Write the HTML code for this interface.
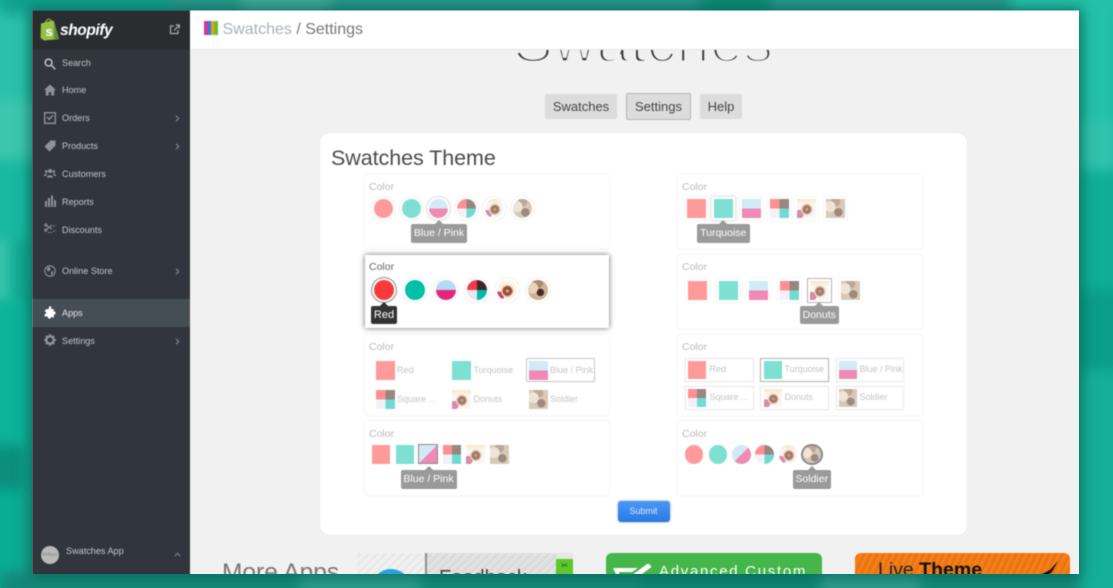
<!DOCTYPE html>
<html><head><meta charset="utf-8"><style>
html,body{margin:0;padding:0;width:1113px;height:588px;overflow:hidden;background:#12a992;font-family:"Liberation Sans",sans-serif}
#root{position:absolute;left:0;top:0;width:1113px;height:588px;overflow:hidden;contain:strict}
#bg{position:absolute;left:0;top:0;width:1113px;height:588px;filter:blur(6px)}
#bg b{position:absolute;display:block}
#shadow{position:absolute;left:32px;top:10.5px;width:1047px;height:563.5px;box-shadow:0 0 12px 3px rgba(0,70,60,.55)}
#win{position:absolute;left:0;top:0;width:1113px;height:588px;clip-path:inset(10.5px 34px 14px 32px);background:#f1f1f1;filter:blur(.45px)}
#win div,#win span,#win i,#win svg{position:absolute;display:block}
.top{left:190px;top:10px;width:889px;height:39px;background:#fff;border-bottom:1px solid #e6e6e6}
.side{left:32px;top:10px;width:158px;height:565px;background:#31363e}
.nav{left:62px;font-size:9.1px;line-height:12px;color:#c0c4c9;white-space:nowrap}
.btn{background:#dcdcdc;border-radius:2px;color:#444;font-size:13px;text-align:center;line-height:25px;height:25px;top:94px}
.p{background:#fff;box-shadow:0 0 3px rgba(0,0,0,.09);width:244px}
.c{font-size:10.5px;line-height:12px;color:#bbb}
.sw{box-sizing:border-box}
.rd{border-radius:50%}
.r{background:#ff9a9a}.t{background:#7de0d0}
.b{background:linear-gradient(#d0eaf8 50%,#f08ab4 50%)}
.g{background:linear-gradient(to bottom right,#d0eaf8 50%,#f08ab4 50%)}
.q{background:conic-gradient(#96877f 0 25%,#70dbd3 25% 50%,#f5f0f8 50% 75%,#ff8f92 75%)}
.d{background:radial-gradient(circle at 52% 55%,#c8a48c 0 9%,#a87a66 10% 30%,#e9d6c6 31% 40%,transparent 42%),radial-gradient(circle at 12% 80%,#d88aa8 0 18%,transparent 20%),linear-gradient(#f6e8c4,#fbf6f4 30%)}
.s{background:radial-gradient(circle at 22% 40%,#efe4d6 0 28%,transparent 30%),radial-gradient(circle at 65% 70%,#9c8a80 0 22%,transparent 24%),radial-gradient(circle at 50% 15%,#bba898 0 24%,transparent 26%),#d8c8b8}
.R{background:#f93a3a}.T{background:#00c0a8}
.B{background:linear-gradient(#aedcf5 50%,#e4267a 50%)}
.Q{background:conic-gradient(#3a2828 0 25%,#00b8ae 25% 50%,#f0e4ee 50% 75%,#f43a4a 75%)}
.D{background:radial-gradient(circle at 52% 55%,#d8b090 0 9%,#97503a 10% 32%,#eed2bb 33% 42%,transparent 44%),radial-gradient(circle at 12% 80%,#c23f6f 0 18%,transparent 20%),#fdf5e5}
.S{background:radial-gradient(circle at 22% 40%,#e8d4ba 0 28%,transparent 30%),radial-gradient(circle at 62% 62%,#3d2d25 0 20%,transparent 22%),radial-gradient(circle at 50% 15%,#a98a70 0 24%,transparent 26%),#cfb090}
.ring{background:#fff;box-shadow:0 0 2px rgba(0,0,0,.14);border-radius:50%}
.fr{background:#fff;box-shadow:0 0 2px rgba(0,0,0,.1)}
.tip{background:#9a9a9a;color:#fff;font-size:10.5px;text-align:center;line-height:19px;height:19px;border-radius:2px}
.tip:before{content:"";position:absolute;left:50%;top:-4px;margin-left:-4px;border:4px solid transparent;border-top:0;border-bottom-color:#9a9a9a}
.lb{font-size:9px;line-height:12px;color:#c4c4c4;white-space:nowrap}
.box{background:#fff;box-sizing:border-box;border:1px solid #ececec;box-shadow:0 0 1px rgba(0,0,0,.1)}
.sel{border:1px solid #b5b5b5}
</style></head><body>
<div id="root">
<div id="bg">
<b style="left:-20px;top:0;width:52px;height:100px;background:#29c1a9"></b>
<b style="left:-20px;top:100px;width:60px;height:60px;background:#3cc6b0"></b>
<b style="left:-20px;top:160px;width:50px;height:80px;background:#18b9a0"></b>
<b style="left:-20px;top:240px;width:30px;height:60px;background:#38c4ad"></b>
<b style="left:-20px;top:300px;width:50px;height:160px;background:#0cb398"></b>
<b style="left:-20px;top:445px;width:44px;height:45px;background:#0b8f7c"></b>
<b style="left:-20px;top:490px;width:40px;height:110px;background:#08ad93"></b>
<b style="left:0;top:-20px;width:1113px;height:34px;background:#26988a"></b>
<b style="left:0;top:-20px;width:170px;height:34px;background:#11a08c"></b>
<b style="left:240px;top:-20px;width:90px;height:34px;background:#40a899"></b>
<b style="left:700px;top:-20px;width:70px;height:34px;background:#0f8a78"></b>
<b style="left:1010px;top:-20px;width:120px;height:34px;background:#25c0a8"></b>
<b style="left:0;top:572px;width:1113px;height:30px;background:#14887a"></b>
<b style="left:300px;top:572px;width:120px;height:30px;background:#2b9c8c"></b>
<b style="left:640px;top:572px;width:220px;height:30px;background:#0f8474"></b>
<b style="left:820px;top:572px;width:100px;height:30px;background:#2e9b8c"></b>
<b style="left:1079px;top:0;width:40px;height:120px;background:#24c0a9"></b>
<b style="left:1079px;top:120px;width:40px;height:50px;background:#31c2ac"></b>
<b style="left:1079px;top:170px;width:40px;height:120px;background:#10ae96"></b>
<b style="left:1079px;top:290px;width:40px;height:80px;background:#0a9d87"></b>
<b style="left:1079px;top:370px;width:40px;height:230px;background:#16ae97"></b>
</div>
<div id="shadow"></div>
<div id="win">

<div style="left:513px;top:7px;font-size:60px;line-height:70px;color:#333;-webkit-text-stroke:3.4px #f1f1f1;white-space:nowrap">Swatches</div>

<div class="top"></div>
<div style="left:204px;top:21px;width:14px;height:14px;background:linear-gradient(90deg,#ee2a8c 0 26%,#2680e8 26% 50%,#f8961a 50% 75%,#50c830 75%)"></div>
<div style="left:222.5px;top:20px;font-size:16px;line-height:19px;color:#aab0ba;white-space:nowrap">Swatches <span style="position:static;display:inline;color:#777">/ Settings</span></div>

<div class="side"></div>
<div style="left:32px;top:10px;width:158px;height:40px;background:#2a2d30"></div>
<svg style="left:40px;top:18px" width="20" height="23" viewBox="0 0 20 23"><path d="M1 5.5 12 2.5 14 3.2 19 21 4 22.5 0.5 20Z" fill="#95bf47"/><path d="M14 3.2 19 21 14 22Z" fill="#5e8e3e"/><path d="M5 6C5.5 3 7.5 1 9 1s2 2 2 4" fill="none" stroke="#95bf47"/><text x="5.5" y="18" font-size="13" font-weight="700" font-family="Liberation Sans" fill="#fff">s</text></svg>
<div style="left:60px;top:21px;font-size:15.5px;line-height:19px;font-weight:700;font-style:italic;color:#fff;letter-spacing:-.4px;white-space:nowrap">shopify</div>
<svg style="left:169px;top:24px" width="11" height="11" viewBox="0 0 11 11" fill="none" stroke="#a8adb2" stroke-width="1.2"><path d="M5 2H1.5v7.500H9V6"/><path d="M5 6.500 10 1.500M6.800 1H10.300V4.500"/></svg>

<div style="left:32px;top:299px;width:158px;height:28px;background:#454d55"></div>

<svg style="left:44px;top:58px" width="12" height="12" viewBox="0 0 12 12" fill="none" stroke="#b9bdc3" stroke-width="1.6"><circle cx="4.600" cy="4.600" r="3.400"/><path d="M7.200 7.200 11.300 11.300"/></svg>
<div class="nav" style="top:57px">Search</div>
<svg style="left:44px;top:84px" width="12" height="12" viewBox="0 0 12 12" fill="#8d9399"><path d="M6 .5 0 6h1.800v5.500h3V8h2.400v3.500h3V6H12Z"/></svg>
<div class="nav" style="top:84px">Home</div>
<svg style="left:44px;top:112px" width="12" height="12" viewBox="0 0 12 12" fill="none" stroke="#8d9399" stroke-width="1.400"><rect x=".7" y=".7" width="10.600" height="10.600"/><path d="M3 5 5.300 7.300 9 3.200"/></svg>
<div class="nav" style="top:112px">Orders</div>
<svg style="left:44px;top:140px" width="12" height="12" viewBox="0 0 12 12" fill="#8d9399"><path d="M6.500.5H11.500V5.500L5.500 11.500.5 6.500Z"/></svg>
<div class="nav" style="top:140px">Products</div>
<svg style="left:44px;top:168px" width="12" height="11" viewBox="0 0 12 11" fill="#8d9399"><circle cx="6" cy="3" r="2"/><circle cx="2.300" cy="3.500" r="1.400"/><circle cx="9.700" cy="3.500" r="1.400"/><path d="M2.800 9.500C3 6.500 9 6.500 9.200 9.500ZM0 8C0 5.800 2 5.500 3 6L1.800 8ZM12 8C12 5.800 10 5.500 9 6L10.200 8Z"/></svg>
<div class="nav" style="top:168px">Customers</div>
<svg style="left:45px;top:195px" width="11" height="12" viewBox="0 0 11 12" fill="#8d9399"><rect y="6" width="2" height="6"/><rect x="3" y="3" width="2" height="9"/><rect x="6" y=".5" width="2" height="11.500"/><rect x="9" y="5" width="2" height="7"/></svg>
<div class="nav" style="top:196px">Reports</div>
<svg style="left:44px;top:223px" width="12" height="11" viewBox="0 0 12 11" fill="none" stroke="#8d9399" stroke-width="1.100"><circle cx="1.800" cy="2" r="1.100"/><circle cx="1.800" cy="7" r="1.100"/><path d="M3 3 8 6M3 6 8 2"/><path d="M9 3h3M9 8h3M4 9.500h5" stroke-dasharray="1.500 1"/></svg>
<div class="nav" style="top:224px">Discounts</div>
<svg style="left:44px;top:265px" width="12" height="12" viewBox="0 0 12 12"><circle cx="6" cy="6" r="5.200" fill="none" stroke="#8d9399" stroke-width="1.100"/><path d="M3 3 6 2 6.500 4.500 4.500 6.500 3 5ZM7 6.500 9.500 6.500 8 10 7 9Z" fill="#8d9399"/></svg>
<div class="nav" style="top:265px">Online Store</div>
<svg style="left:44px;top:306px" width="12" height="13" viewBox="0 0 12 13" fill="#fff"><path d="M5 1 6.500 0l1 1.500L7 3l3 .2L9.700 5.500 11.500 5.800 11.500 8.200 9.800 8.500 10 11.500 7 11 6.500 12.500 4 12.500 4 10.500.5 10.500.8 8 2.500 7.500 1.500 5.500.5 5 2.500 3 4.500 3.500Z"/></svg>
<div class="nav" style="top:307px;color:#e4e6e8">Apps</div>
<svg style="left:44px;top:334px" width="12" height="12" viewBox="0 0 12 12"><circle cx="6" cy="6" r="3.700" fill="none" stroke="#8d9399" stroke-width="2.400"/><path d="M6 0V12M0 6H12M1.800 1.800 10.200 10.200M10.200 1.800 1.800 10.200" stroke="#8d9399" stroke-width="1.700" stroke-dasharray="2 8 2 0"/></svg>
<div class="nav" style="top:335px">Settings</div>

<svg style="left:175px;top:115px" width="5" height="7" viewBox="0 0 5 7" fill="none" stroke="#7f848a" stroke-width="1.200"><path d="M1 .8 3.700 3.500 1 6.200"/></svg>
<svg style="left:175px;top:143px" width="5" height="7" viewBox="0 0 5 7" fill="none" stroke="#7f848a" stroke-width="1.200"><path d="M1 .8 3.700 3.500 1 6.200"/></svg>
<svg style="left:175px;top:268px" width="5" height="7" viewBox="0 0 5 7" fill="none" stroke="#7f848a" stroke-width="1.200"><path d="M1 .8 3.700 3.500 1 6.200"/></svg>
<svg style="left:175px;top:338px" width="5" height="7" viewBox="0 0 5 7" fill="none" stroke="#7f848a" stroke-width="1.200"><path d="M1 .8 3.700 3.500 1 6.200"/></svg>
<svg style="left:174px;top:552px" width="7" height="5" viewBox="0 0 7 5" fill="none" stroke="#7f848a" stroke-width="1.200"><path d="M.8 4 3.500 1.300 6.200 4"/></svg>

<div class="rd" style="left:40.500px;top:546px;width:18px;height:18px;background:#b9b9b9;color:#8c8c8c;font-size:5px;line-height:18px;text-align:center">Netbye</div>
<div class="nav" style="left:66px;top:545px;color:#c3c7cb">Swatches App</div>

<div class="btn" style="left:545px;width:72px">Swatches</div>
<div class="btn" style="left:626px;top:93px;width:65px;height:27px;line-height:25px;box-sizing:border-box;border:1px solid #b4b4b4">Settings</div>
<div class="btn" style="left:700px;width:42px">Help</div>

<div style="left:320px;top:133px;width:647px;height:402px;background:#fff;border-radius:10px;box-shadow:0 0 2px rgba(0,0,0,.06)"></div>
<div style="left:331px;top:145px;font-size:21.5px;line-height:26px;letter-spacing:-.07px;color:#4a4a4a;white-space:nowrap">Swatches Theme</div>

<div class="p" style="left:365px;top:175px;height:73px"></div>
<div class="c" style="left:369px;top:181px">Color</div>
<div class="ring" style="left:371.500px;top:196.500px;width:23px;height:23px"></div><div class="sw rd r" style="left:373.500px;top:198.500px;width:19px;height:19px"></div>
<div class="ring" style="left:399.500px;top:196.500px;width:23px;height:23px"></div><div class="sw rd t" style="left:401.500px;top:198.500px;width:19px;height:19px"></div>
<div class="ring" style="left:427px;top:196.500px;width:23px;height:23px;box-shadow:0 0 0 1px #e2e2e2,0 0 3px rgba(0,0,0,.15)"></div><div class="sw rd b" style="left:429px;top:198.500px;width:19px;height:19px"></div>
<div class="ring" style="left:454.500px;top:196.500px;width:23px;height:23px"></div><div class="sw rd q" style="left:456.500px;top:198.500px;width:19px;height:19px"></div>
<div class="ring" style="left:482.500px;top:196.500px;width:23px;height:23px"></div><div class="sw rd d" style="left:484.500px;top:198.500px;width:19px;height:19px"></div>
<div class="ring" style="left:510.500px;top:196.500px;width:23px;height:23px"></div><div class="sw rd s" style="left:512.500px;top:198.500px;width:19px;height:19px"></div>
<div class="tip" style="left:411px;top:224px;width:56px">Blue / Pink</div>

<div class="p" style="left:365px;top:255px;height:73px;box-shadow:0 0 5px rgba(0,0,0,.6)"></div>
<div class="c" style="left:369px;top:261px;color:#666">Color</div>
<div class="ring" style="left:372px;top:278px;width:24px;height:24px;box-shadow:0 0 0 1px #888"></div><div class="sw rd R" style="left:374px;top:280px;width:20px;height:20px"></div>
<div class="ring" style="left:403px;top:278px;width:24px;height:24px"></div><div class="sw rd T" style="left:405px;top:280px;width:20px;height:20px"></div>
<div class="ring" style="left:434px;top:278px;width:24px;height:24px"></div><div class="sw rd B" style="left:436px;top:280px;width:20px;height:20px"></div>
<div class="ring" style="left:464.500px;top:278px;width:24px;height:24px"></div><div class="sw rd Q" style="left:466.500px;top:280px;width:20px;height:20px"></div>
<div class="ring" style="left:495px;top:278px;width:24px;height:24px"></div><div class="sw rd D" style="left:497px;top:280px;width:20px;height:20px"></div>
<div class="ring" style="left:526px;top:278px;width:24px;height:24px"></div><div class="sw rd S" style="left:528px;top:280px;width:20px;height:20px"></div>
<div class="tip" style="left:371px;top:306px;width:26px;height:18px;line-height:18px;background:#333;font-size:11px">Red<span style="left:9px;top:-4px;border:4px solid transparent;border-top:0;border-bottom-color:#333"></span></div>

<div class="p" style="left:365px;top:335px;height:80px"></div>
<div class="c" style="left:369px;top:341px">Color</div>
<div class="box sel" style="left:526px;top:358px;width:69px;height:24px;border-color:#c8c8c8;border-radius:2px"></div>
<div class="sw r" style="left:376px;top:361px;width:18.500px;height:18.500px"></div><div class="lb" style="left:397px;top:364px">Red</div>
<div class="sw t" style="left:452px;top:361px;width:18.500px;height:18.500px"></div><div class="lb" style="left:473.500px;top:364px">Turquoise</div>
<div class="sw b" style="left:529px;top:361px;width:18.500px;height:18.500px"></div><div class="lb" style="left:550px;top:364px">Blue / Pink</div>
<div class="sw q" style="left:376px;top:390px;width:18.500px;height:18.500px"></div><div class="lb" style="left:397px;top:393px">Square ...</div>
<div class="sw d" style="left:452px;top:390px;width:18.500px;height:18.500px"></div><div class="lb" style="left:473.500px;top:393px">Donuts</div>
<div class="sw s" style="left:529px;top:390px;width:18.500px;height:18.500px"></div><div class="lb" style="left:550px;top:393px">Soldier</div>

<div class="p" style="left:365px;top:421px;height:74px"></div>
<div class="c" style="left:369px;top:428px">Color</div>
<div class="sw r" style="left:371.500px;top:445px;width:18.500px;height:18.500px"></div>
<div class="sw t" style="left:395.500px;top:445px;width:18.500px;height:18.500px"></div>
<div class="sw g" style="left:418px;top:444px;width:20px;height:20px;border:1.500px solid #8a8a8a;outline:1px solid #fff"></div>
<div class="sw q" style="left:442.500px;top:445px;width:18.500px;height:18.500px"></div>
<div class="sw d" style="left:466px;top:445px;width:18.500px;height:18.500px"></div>
<div class="sw s" style="left:490px;top:445px;width:18.500px;height:18.500px"></div>
<div class="tip" style="left:400.500px;top:470px;width:56px">Blue / Pink</div>

<div class="p" style="left:678px;top:175px;height:73px"></div>
<div class="c" style="left:682px;top:181px">Color</div>
<div class="fr" style="left:684.500px;top:197px;width:23px;height:23px"></div><div class="sw r" style="left:686.500px;top:199px;width:19px;height:19px"></div>
<div class="fr" style="left:712px;top:197px;width:23px;height:23px;box-shadow:0 0 3px 1px rgba(0,0,0,.14)"></div><div class="sw t" style="left:714px;top:199px;width:19px;height:19px"></div>
<div class="fr" style="left:740px;top:197px;width:23px;height:23px"></div><div class="sw b" style="left:742px;top:199px;width:19px;height:19px"></div>
<div class="fr" style="left:767.500px;top:197px;width:23px;height:23px"></div><div class="sw q" style="left:769.500px;top:199px;width:19px;height:19px"></div>
<div class="fr" style="left:795px;top:197px;width:23px;height:23px"></div><div class="sw d" style="left:797px;top:199px;width:19px;height:19px"></div>
<div class="fr" style="left:823.500px;top:197px;width:23px;height:23px"></div><div class="sw s" style="left:825.500px;top:199px;width:19px;height:19px"></div>
<div class="tip" style="left:697px;top:224px;width:52.500px">Turquoise</div>

<div class="p" style="left:678px;top:255px;height:73px"></div>
<div class="c" style="left:682px;top:261px">Color</div>
<div class="fr" style="left:686px;top:278.500px;width:23px;height:23px"></div><div class="sw r" style="left:688px;top:280.500px;width:19px;height:19px"></div>
<div class="fr" style="left:716.500px;top:278.500px;width:23px;height:23px"></div><div class="sw t" style="left:718.500px;top:280.500px;width:19px;height:19px"></div>
<div class="fr" style="left:747px;top:278.500px;width:23px;height:23px"></div><div class="sw b" style="left:749px;top:280.500px;width:19px;height:19px"></div>
<div class="fr" style="left:777.500px;top:278.500px;width:23px;height:23px"></div><div class="sw q" style="left:779.500px;top:280.500px;width:19px;height:19px"></div>
<div class="fr" style="left:808px;top:278.500px;width:23px;height:23px;box-shadow:0 0 0 1px #b4b4b4"></div><div class="sw d" style="left:810px;top:280.500px;width:19px;height:19px"></div>
<div class="fr" style="left:838.500px;top:278.500px;width:23px;height:23px"></div><div class="sw s" style="left:840.500px;top:280.500px;width:19px;height:19px"></div>
<div class="tip" style="left:799.500px;top:306px;width:39.500px;height:18px;line-height:18px">Donuts</div>

<div class="p" style="left:678px;top:335px;height:80px"></div>
<div class="c" style="left:682px;top:341px">Color</div>
<div class="box" style="left:685px;top:358px;width:68.500px;height:24px"></div>
<div class="box sel" style="left:760px;top:358px;width:69px;height:24px"></div>
<div class="box" style="left:836px;top:358px;width:68px;height:24px"></div>
<div class="box" style="left:685px;top:386px;width:68.500px;height:23.500px"></div>
<div class="box" style="left:760px;top:386px;width:69px;height:23.500px"></div>
<div class="box" style="left:836px;top:386px;width:68px;height:23.500px"></div>
<div class="sw r" style="left:688px;top:361px;width:18px;height:18px"></div><div class="lb" style="left:709.500px;top:363px">Red</div>
<div class="sw t" style="left:763.500px;top:361px;width:18px;height:18px"></div><div class="lb" style="left:784.500px;top:363px">Turquoise</div>
<div class="sw b" style="left:838.500px;top:361px;width:18px;height:18px"></div><div class="lb" style="left:859.500px;top:363px">Blue / Pink</div>
<div class="sw q" style="left:688px;top:389px;width:18px;height:18px"></div><div class="lb" style="left:709.500px;top:391px">Square ...</div>
<div class="sw d" style="left:763.500px;top:389px;width:18px;height:18px"></div><div class="lb" style="left:784.500px;top:391px">Donuts</div>
<div class="sw s" style="left:838.500px;top:389px;width:18px;height:18px"></div><div class="lb" style="left:859.500px;top:391px">Soldier</div>

<div class="p" style="left:678px;top:421px;height:74px"></div>
<div class="c" style="left:682px;top:428px">Color</div>
<div class="sw rd r" style="left:684.500px;top:445px;width:18.500px;height:18.500px"></div>
<div class="sw rd t" style="left:708.500px;top:445px;width:18.500px;height:18.500px"></div>
<div class="sw rd g" style="left:732px;top:445px;width:18.500px;height:18.500px"></div>
<div class="sw rd q" style="left:755px;top:445px;width:18.500px;height:18.500px"></div>
<div class="sw rd d" style="left:779px;top:445px;width:18.500px;height:18.500px"></div>
<div class="sw rd s" style="left:801px;top:443.500px;width:21.500px;height:21.500px;border:2px solid #8a8a8a"></div>
<div class="tip" style="left:792.500px;top:470px;width:38.500px">Soldier</div>

<div style="left:617.500px;top:500.500px;width:52px;height:21.500px;border-radius:3px;background:linear-gradient(#4a98f4,#2a78e4);box-shadow:0 0 2px rgba(0,60,160,.5);color:#dbe9fb;font-size:9px;line-height:21px;text-align:center">Submit</div>

<div style="left:222px;top:559px;font-size:24.5px;line-height:28px;color:#777;white-space:nowrap">More Apps</div>

<div style="left:357px;top:553px;width:68px;height:25px;background:repeating-linear-gradient(135deg,#efefef 0 2px,#e6e6e6 2px 4px,#f2f2f2 4px 6px)"></div>
<div style="left:427px;top:553px;width:129px;height:25px;background:repeating-linear-gradient(135deg,#e0e0e0 0 2px,#d8d8d8 2px 4px,#e4e4e4 4px 6px)"></div>
<div style="left:556px;top:553px;width:17px;height:6px;background:#e6e6e6"></div>
<div style="left:425px;top:553px;width:2px;height:25px;background:#8d8d8d"></div>
<div class="rd" style="left:371px;top:569px;width:40px;height:40px;background:#2a9fdc"></div>
<div style="left:439px;top:565.500px;font-size:20px;line-height:24px;color:#444;white-space:nowrap">Feedback</div>
<div style="left:556px;top:559px;width:17px;height:18px;background:#5cc82a;color:#234;font-size:8px;line-height:14px;text-align:center">✂</div>

<div style="left:606px;top:553px;width:216px;height:30px;background:#45b649;border-radius:6px 6px 0 0"></div>
<svg style="left:612px;top:564px" width="40" height="16" viewBox="0 0 40 16"><path d="M1 5V16M1 4H26L20 8H7V16" fill="#fff"/><path d="M23 12 38 1" stroke="#fff" stroke-width="5"/></svg>
<div style="left:659px;top:563px;font-size:15px;line-height:18px;letter-spacing:1.700px;color:#fff;white-space:nowrap">Advanced Custom</div>

<div style="left:855px;top:553px;width:215px;height:30px;border-radius:6px 6px 0 0;background:repeating-linear-gradient(115deg,#f07a14 0 2px,#ec700e 2px 4px,#f2841f 4px 6px)"></div>
<div style="left:878px;top:558px;font-size:19.500px;line-height:24px;color:#222;white-space:nowrap">Live <span style="position:static;display:inline;font-weight:700;color:#111">Theme</span></div>
<svg style="left:1038px;top:561px" width="22" height="16" viewBox="0 0 22 16" fill="#111"><path d="M0 15 12 9 20 0 14 11 10 14Z"/></svg>

</div>
</div>
</body></html>
